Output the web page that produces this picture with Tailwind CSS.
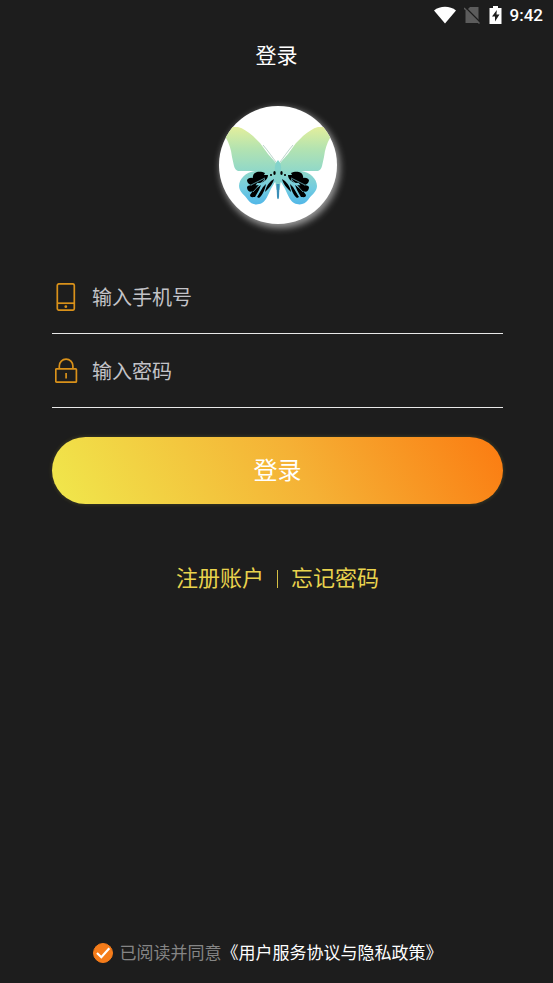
<!DOCTYPE html>
<html lang="zh-CN">
<head>
    <meta charset="UTF-8">
    <meta name="viewport" content="width=device-width, initial-scale=1.0">
    <title>登录</title>
    <script src="https://cdn.jsdelivr.net/npm/@tailwindcss/browser@4"></script>
</head>
<body class="bg-[#1d1d1d] font-['Roboto','Noto_Sans_CJK_SC',sans-serif] text-white">
    <div class="flex min-h-screen flex-col">
        <!-- 状态栏 -->
        <div class="flex h-[30px] items-center justify-end pr-[10px]">
            <svg class="mr-2 h-[18px] w-[22px]" viewBox="0 0 22 18" fill="#fff" aria-hidden="true">
                <path d="M0 4.500C6-.5 16-.5 22 4.500L11 17.500z"/>
            </svg>
            <svg class="mr-[9px] h-[18px] w-4" viewBox="0 0 16 18" aria-hidden="true">
                <path d="M6 1h8.500v16H1.500V5.500z" fill="#5c5c5c"/>
                <path d="M1 1L16 16" stroke="#1d1d1d" stroke-width="1.500"/>
                <path d="M0 2L15.500 17.500" stroke="#5c5c5c" stroke-width="1.500"/>
            </svg>
            <svg class="mr-2 h-[18px] w-[13px]" viewBox="0 0 13 18" aria-hidden="true">
                <path d="M4 0h5v2h3.500v16H.5V2H4z" fill="#fff"/>
                <path d="M7.800 4L3 10.500h3V15.500L10.500 8.500H7.500z" fill="#1d1d1d"/>
            </svg>
            <span class="text-[17px] leading-6 font-medium">9:42</span>
        </div>

        <header class="flex h-[52px] items-center justify-center">
            <h1 class="text-[21px] leading-8">登录</h1>
        </header>

        <main class="flex flex-col pr-[50px] pl-[52px]">
            <!-- 标志 -->
            <div class="mt-6 size-[118px] self-center overflow-hidden rounded-full bg-white shadow-[2px_3px_7px_1px_rgba(255,255,255,0.55)]">
                <svg class="size-full" viewBox="0 0 118 118" role="img" aria-label="蝴蝶">
                    <defs>
                        <linearGradient id="wing" gradientUnits="userSpaceOnUse" x1="0" y1="20" x2="0" y2="100">
                            <stop offset="0" stop-color="#e5ef9b"/>
                            <stop offset=".28" stop-color="#b4e3b0"/>
                            <stop offset=".56" stop-color="#91d8c8"/>
                            <stop offset=".78" stop-color="#72cce0"/>
                            <stop offset="1" stop-color="#4fb5e8"/>
                        </linearGradient>
                        <g id="half">
                            <path fill="url(#wing)" d="M59 55L57 57L49 48L41 37L34 30C29 26 24 22 19 21L2 21L7 32C10 37 12 43 13 51L15 60Q16 64 19 65L36 65C27 66 20 73 20 80C20 86 26 89 29 94C32 98 37 100 43 97C48 94 50 86 53 81L56 76L59 78z"/>
                            <path fill="none" stroke="#aac9bc" stroke-width=".8" d="M57 56C53 51 50 46 44 39"/>
                            <path d="M34 70C35 65 42 65 46 67L45 69L49 69C49 73 45 77 40 77C35 76 33 74 34 70z"/>
                            <path d="M28 74C31 70 36 72 39 76L36 80C32 79 28 78 28 74zM28 81C30 78 36 80 40 79L36 84C32 87 28 86 28 81zM31 89C34 84 38 82 42 79L40 84L36 91C34 91 31 92 31 89zM38 91L44 81L47 78C46 83 44 89 40 92z"/>
                            <path d="M46 86C47 80 51 75 55 73C54 78 50 82 46 86z"/>
                            <path fill="none" stroke="#7bcbd8" stroke-width=".7" d="M46 72L32 79M46 73L34 86M46 74L38 90"/>
                            <circle cx="52" cy="69" r="1.100"/>
                        </g>
                    </defs>
                    <use href="#half"/>
                    <use href="#half" transform="translate(118 0) scale(-1 1)"/>
                    <path fill="#83d3cb" d="M59 54C62 57 62.500 61 62 64C62 70 62 76 60.500 84H57.500C56 76 56 70 56 64C55.500 61 56 57 59 54z"/>
                    <path fill="#3a8fb8" d="M57.500 78H60.500L60 91C59.500 94 58.500 94 58 91z"/>
                    <ellipse cx="55.500" cy="67" rx="1.200" ry="1.900"/>
                    <ellipse cx="62.500" cy="67" rx="1.200" ry="1.900"/>
                </svg>
            </div>

            <form class="mt-9">
                <div class="flex h-[74px] items-center border-b border-[#e8e8e8] pl-[3px]">
                    <label for="phone" aria-label="手机号" class="shrink-0">
                        <svg class="size-7" viewBox="0 0 28 28" fill="none" stroke="#d9911a" stroke-width="1.700" aria-hidden="true">
                            <rect x="2.300" y=".8" width="17" height="26.400" rx="1.800"/>
                            <path d="M2.300 20.200h17"/>
                            <circle cx="10.800" cy="23.700" r="1.400" fill="#d9911a" stroke="none"/>
                        </svg>
                    </label>
                    <input id="phone" type="tel" placeholder="输入手机号" class="ml-[9px] h-10 min-w-0 flex-1 bg-transparent pt-[2px] text-[20px] leading-8 outline-none placeholder:text-[#c3c3c8]">
                </div>
                <div class="flex h-[74px] items-center border-b border-[#e8e8e8] pl-[3px]">
                    <label for="password" aria-label="密码" class="shrink-0">
                        <svg class="size-7" viewBox="0 0 28 28" fill="none" stroke="#d9911a" stroke-width="1.700" aria-hidden="true">
                            <rect x=".8" y="11.800" width="20.600" height="13.400" rx=".8"/>
                            <path d="M4.300 11.800V9a6.800 6.800 0 0 1 13.600 0v2.800M11.100 16v5.500"/>
                        </svg>
                    </label>
                    <input id="password" type="password" placeholder="输入密码" class="ml-[9px] h-10 min-w-0 flex-1 bg-transparent pt-[2px] text-[20px] leading-8 outline-none placeholder:text-[#c3c3c8]">
                </div>
                <button type="submit" class="mt-[29px] h-[67px] w-full rounded-full bg-linear-[60deg,#f0e84c,#f5b135_55%,#fb7b11] text-[24px] leading-9 shadow-[0_0_4px_rgba(240,232,76,0.2)]">登录</button>
            </form>

            <nav class="mt-[59px] flex items-center justify-center text-[22px] leading-8 text-[#e9d34d]">
                <a href="#register">注册账户</a>
                <span class="mx-[13px] h-[18px] w-px bg-[#d5c044]"></span>
                <a href="#forgot">忘记密码</a>
            </nav>
        </main>

        <!-- 用户协议 -->
        <footer class="mt-auto flex items-center justify-center pr-[18px] pb-[18px] text-[17px] leading-6">
            <span class="relative mr-[7px] size-5">
                <input id="agree" type="checkbox" checked class="peer block size-5 appearance-none rounded-full border border-[#f57c1a] checked:bg-[#f57c1a]">
                <svg class="pointer-events-none absolute inset-0 hidden size-5 peer-checked:block" viewBox="0 0 20 20" fill="none" stroke="#fff" stroke-width="2.200" aria-hidden="true">
                    <path d="M4 10l4.300 4.200 8-9"/>
                </svg>
            </span>
            <label for="agree" class="text-[#858585]">已阅读并同意</label>
            <a href="#terms">《用户服务协议与隐私政策》</a>
        </footer>
    </div>
</body>
</html>
